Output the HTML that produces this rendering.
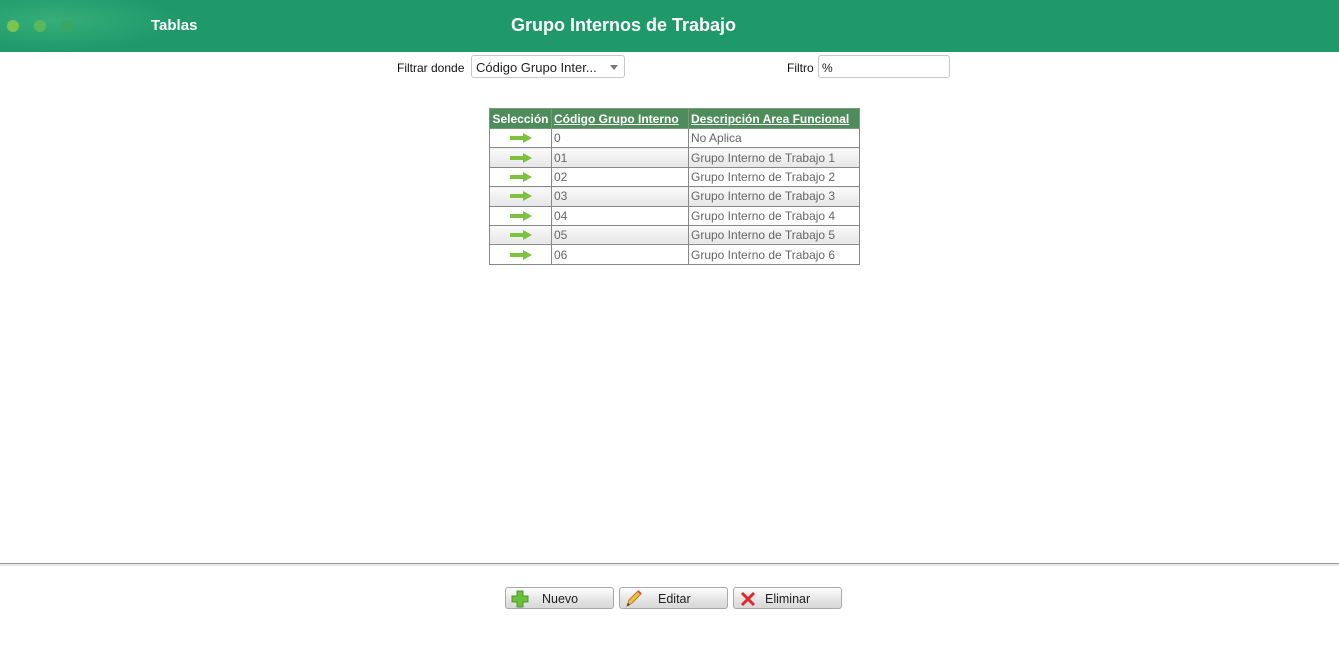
<!DOCTYPE html>
<html><head><meta charset="utf-8"><style>
body{margin:0;width:1339px;height:645px;background:#fff;font-family:"Liberation Sans",sans-serif;position:relative;overflow:hidden}
.hdr{position:absolute;left:0;top:0;width:1339px;height:52px;background:#1f996a}
.glow{position:absolute;left:0;top:0;width:180px;height:52px;background:radial-gradient(ellipse at 30% 40%,rgba(80,200,140,.45),rgba(31,153,106,0) 70%)}
.dot{position:absolute;top:20px;width:12px;height:12px;border-radius:50%}
.t{position:absolute;color:#fff;font-weight:bold;font-family:"Liberation Sans",sans-serif}
.lbl{position:absolute;font-size:12px;color:#111}
.box{position:absolute;border:1px solid #c8c8c8;border-radius:3px;background:#fff;font-size:12px;color:#222;box-sizing:border-box}
table{position:absolute;left:489px;top:108px;border-collapse:collapse;font-size:12px;table-layout:fixed;width:370px}
th{background:#4f8c5c;color:#fff;font-weight:bold;padding:0 2px;height:19px;border:1px solid #7a9a7a;white-space:nowrap;overflow:hidden;text-align:left}
th:first-child{text-align:center}
td{border:1px solid #888;height:18.4px;padding:0 2px;color:#666;white-space:nowrap;overflow:hidden}
tr.alt td{background:linear-gradient(#fafafa,#e6e6e6)}
.arr{display:block;margin:0 auto;width:22px;height:10px}
.btn{position:absolute;top:587px;width:109px;height:22px;border:1px solid #aaa;border-radius:3px;box-sizing:border-box;background:linear-gradient(#fdfdfd,#e4e4e4 60%,#d8d8d8);font-size:12.5px;color:#222}
.btn span{position:absolute;top:4px}
.btn svg{position:absolute;left:5px;top:2px}
</style></head><body>
<div class="hdr"><div class="glow"></div>
<div class="dot" style="left:7px;background:#7dc34f"></div>
<div class="dot" style="left:34px;background:#5bb85a"></div>
<div class="dot" style="left:61px;background:#39a763"></div>
<div class="t" style="left:151px;top:17px;font-size:15px">Tablas</div>
<div class="t" style="left:511px;top:15px;font-size:18px">Grupo Internos de Trabajo</div>
</div>
<div class="lbl" style="left:397px;top:61px">Filtrar donde</div>
<div class="box" style="left:471px;top:55px;width:154px;height:23px;padding:4px 0 0 4px;font-size:13px">Código Grupo Inter...<span style="position:absolute;right:6px;top:9px;border-left:4px solid transparent;border-right:4px solid transparent;border-top:5px solid #777"></span></div>
<div class="lbl" style="left:787px;top:61px">Filtro</div>
<div class="box" style="left:818px;top:55px;width:132px;height:23px;padding:5px 0 0 3px">%</div>
<table>
<colgroup><col style="width:62px"><col style="width:137px"><col style="width:171px"></colgroup>
<tr><th>Selección</th><th><u>Código Grupo Interno</u></th><th><u>Descripción Area Funcional</u></th></tr>
<tr><td><svg class="arr" viewBox="0 0 22 10"><path d="M0 3h13V0l9 5-9 5V7H0z" fill="#7cc23c"/></svg></td><td>0</td><td>No Aplica</td></tr>
<tr class="alt"><td><svg class="arr" viewBox="0 0 22 10"><path d="M0 3h13V0l9 5-9 5V7H0z" fill="#7cc23c"/></svg></td><td>01</td><td>Grupo Interno de Trabajo 1</td></tr>
<tr><td><svg class="arr" viewBox="0 0 22 10"><path d="M0 3h13V0l9 5-9 5V7H0z" fill="#7cc23c"/></svg></td><td>02</td><td>Grupo Interno de Trabajo 2</td></tr>
<tr class="alt"><td><svg class="arr" viewBox="0 0 22 10"><path d="M0 3h13V0l9 5-9 5V7H0z" fill="#7cc23c"/></svg></td><td>03</td><td>Grupo Interno de Trabajo 3</td></tr>
<tr><td><svg class="arr" viewBox="0 0 22 10"><path d="M0 3h13V0l9 5-9 5V7H0z" fill="#7cc23c"/></svg></td><td>04</td><td>Grupo Interno de Trabajo 4</td></tr>
<tr class="alt"><td><svg class="arr" viewBox="0 0 22 10"><path d="M0 3h13V0l9 5-9 5V7H0z" fill="#7cc23c"/></svg></td><td>05</td><td>Grupo Interno de Trabajo 5</td></tr>
<tr><td><svg class="arr" viewBox="0 0 22 10"><path d="M0 3h13V0l9 5-9 5V7H0z" fill="#7cc23c"/></svg></td><td>06</td><td>Grupo Interno de Trabajo 6</td></tr>
</table>
<div style="position:absolute;left:0;top:563px;width:1339px;height:1px;background:#999"></div>
<div style="position:absolute;left:0;top:564px;width:1339px;height:2px;background:#e8e8e8"></div>
<div class="btn" style="left:505px"><svg width="18" height="18" viewBox="0 0 18 18"><path d="M6 1h6v5h5v6h-5v5H6v-5H1V6h5z" fill="#6cbf3a" stroke="#4a9a2a"/></svg><span style="left:36px">Nuevo</span></div>
<div class="btn" style="left:619px"><svg width="18" height="18" viewBox="0 0 18 18"><path d="M2 16l2-6 9-9 3 3-9 9z" fill="#f0c040" stroke="#b08020"/><path d="M2 16l1-3 2 2z" fill="#333"/><path d="M13 1l3 3" stroke="#e05050" stroke-width="2"/></svg><span style="left:38px">Editar</span></div>
<div class="btn" style="left:733px"><svg width="18" height="18" viewBox="0 0 18 18"><path d="M3 3l12 12M15 3L3 15" stroke="#e02828" stroke-width="3"/></svg><span style="left:31px">Eliminar</span></div>
</body></html>
